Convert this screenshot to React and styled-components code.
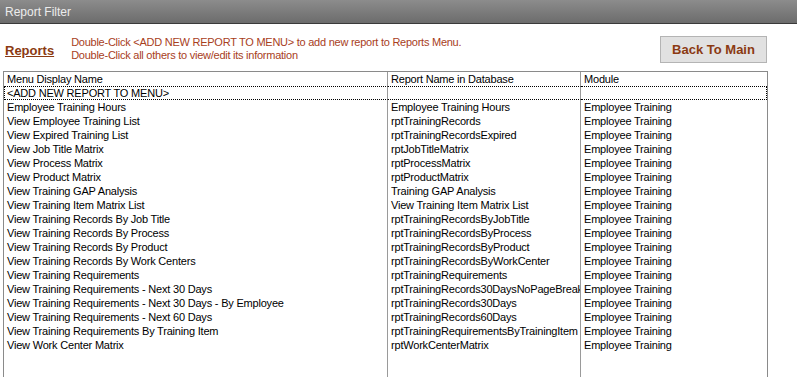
import React from "react";
import styled, { createGlobalStyle } from "styled-components";

const GlobalStyle = createGlobalStyle`
  html, body {
    margin: 0;
    padding: 0;
    background: #fff;
  }
  body {
    font-family: "Liberation Sans", Arial, sans-serif;
    font-size: 11px;
    color: #000;
  }
`;

const Page = styled.div`
  height: 100vh;
  display: flex;
  flex-direction: column;
  overflow: hidden;
`;

const TitleBar = styled.div`
  height: 23px;
  line-height: 24px;
  padding-left: 5px;
  background: linear-gradient(#8c8c8c, #6c6c6c);
  border-bottom: 1px solid #3a3a3a;
  color: #ececec;
  font-size: 12px;
`;

const Toolbar = styled.div`
  height: 47px;
  display: flex;
  align-items: center;
  padding: 0 30px 0 5px;
`;

const ReportsLink = styled.a`
  color: #8b3a12;
  font-weight: bold;
  font-size: 13px;
  text-decoration: underline;
  margin-top: 6px;
  cursor: pointer;
`;

const Instructions = styled.div`
  margin-left: 17px;
  color: #a8401c;
  font-size: 11px;
  line-height: 13px;
  letter-spacing: -0.25px;
  margin-top: 2px;
`;

const BackButton = styled.button`
  margin-left: auto;
  width: 107px;
  height: 27px;
  background: #e1e1e1;
  border: 1px solid #b4b4b4;
  color: #8b3a12;
  font-family: "Liberation Sans", Arial, sans-serif;
  font-weight: bold;
  font-size: 13px;
  padding: 0;
  margin-top: 3px;
`;

const GridWrap = styled.div`
  flex: 1;
  margin-left: 3px;
  width: 763px;
  border: 1px solid #8a8a8a;
  border-bottom: none;
  overflow: hidden;
`;

const Table = styled.table`
  width: 100%;
  height: 100%;
  table-layout: fixed;
  border-collapse: separate;
  border-spacing: 0;
  letter-spacing: -0.2px;
`;

const Row = styled.tr`
  height: ${(p) => (p.$filler ? "auto" : "14px")};
`;

const Cell = styled.td`
  padding: 0 3px;
  height: ${(p) => (p.$filler ? "auto" : "14px")};
  line-height: 14px;
  white-space: nowrap;
  overflow: hidden;
  vertical-align: middle;
  border-right: ${(p) => (p.$last ? "none" : "1px solid #9a9a9a")};
  ${(p) =>
    p.$focus &&
    `
    height: 12px;
    line-height: 12px;
    border-top: 1px dotted #000;
    border-bottom: 1px dotted #000;
  `}
  ${(p) => p.$focus && p.$first && `border-left: 1px dotted #000; padding-left: 2px;`}
  ${(p) => p.$focus && p.$last && `border-right: 1px dotted #000;`}
`;

const columns = ["Menu Display Name", "Report Name in Database", "Module"];

const reports = [
  ["Employee Training Hours", "Employee Training Hours"],
  ["View Employee Training List", "rptTrainingRecords"],
  ["View Expired Training List", "rptTrainingRecordsExpired"],
  ["View Job Title Matrix", "rptJobTitleMatrix"],
  ["View Process Matrix", "rptProcessMatrix"],
  ["View Product Matrix", "rptProductMatrix"],
  ["View Training GAP Analysis", "Training GAP Analysis"],
  ["View Training Item Matrix List", "View Training Item Matrix List"],
  ["View Training Records By Job Title", "rptTrainingRecordsByJobTitle"],
  ["View Training Records By Process", "rptTrainingRecordsByProcess"],
  ["View Training Records By Product", "rptTrainingRecordsByProduct"],
  ["View Training Records By Work Centers", "rptTrainingRecordsByWorkCenter"],
  ["View Training Requirements", "rptTrainingRequirements"],
  ["View Training Requirements - Next 30 Days", "rptTrainingRecords30DaysNoPageBreak"],
  ["View Training Requirements - Next 30 Days - By Employee", "rptTrainingRecords30Days"],
  ["View Training Requirements - Next 60 Days", "rptTrainingRecords60Days"],
  ["View Training Requirements By Training Item", "rptTrainingRequirementsByTrainingItem"],
  ["View Work Center Matrix", "rptWorkCenterMatrix"],
];

const App = () => {
  return (
    <Page>
      <GlobalStyle />
      <TitleBar>Report Filter</TitleBar>

      <Toolbar>
        <ReportsLink>Reports</ReportsLink>
        <Instructions>
          Double-Click &lt;ADD NEW REPORT TO MENU&gt; to add new report to Reports Menu.
          <br />
          Double-Click all others to view/edit its information
        </Instructions>
        <BackButton>Back To Main</BackButton>
      </Toolbar>

      <GridWrap>
        <Table>
          <colgroup>
            <col style={{ width: "384px" }} />
            <col style={{ width: "193px" }} />
            <col />
          </colgroup>
          <tbody>
            <Row>
              {columns.map((c, i) => (
                <Cell key={c} $last={i === 2}>
                  {c}
                </Cell>
              ))}
            </Row>
            <Row>
              <Cell $focus $first>
                &lt;ADD NEW REPORT TO MENU&gt;
              </Cell>
              <Cell $focus></Cell>
              <Cell $focus $last></Cell>
            </Row>
            {reports.map(([name, db]) => (
              <Row key={name}>
                <Cell>{name}</Cell>
                <Cell>{db}</Cell>
                <Cell $last>Employee Training</Cell>
              </Row>
            ))}
            <Row $filler>
              <Cell $filler></Cell>
              <Cell $filler></Cell>
              <Cell $filler $last></Cell>
            </Row>
          </tbody>
        </Table>
      </GridWrap>
    </Page>
  );
};

export default App;
